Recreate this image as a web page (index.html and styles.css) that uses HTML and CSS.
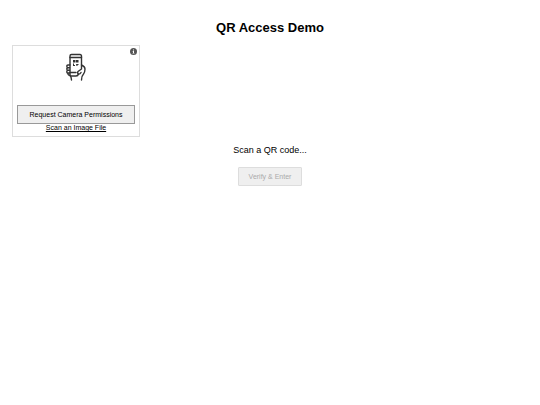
FILE: index.html
```html
<!DOCTYPE html>
<html lang="en">
<head>
  <meta charset="UTF-8">
  <meta name="viewport" content="width=device-width, initial-scale=1.0">
  <title>QR Access Demo</title>
  <link rel="stylesheet" href="styles.css">
</head>
<body>

  <h1>QR Access Demo</h1>

  <div class="reader">
    <button class="info-btn" type="button" aria-label="About the scanner">
      <svg viewBox="0 0 14 14" width="7" height="7">
        <circle cx="7" cy="7" r="7" fill="#555"/>
        <path d="M5 6h3v4h1v1H5v-1h1V7H5zM6 3h2v2H6z" fill="#fff"/>
      </svg>
    </button>
    <svg class="phone-icon" viewBox="0 0 20 28" width="20" height="28" fill="none" stroke="#333" stroke-width="1.4" stroke-linecap="round" stroke-linejoin="round">
      <path d="M15.500 12V3Q15.500 1.500 14 1.500H5.500Q4 1.500 4 3V22Q4 23 5 23H10Q12 23 12.500 21"/>
      <path d="M4 4.500H15.500M4 19.500H10"/>
      <path d="M4 12H2Q0.800 12 0.800 13.300T2 14.700H3.500M2 14.700Q0.800 14.700 0.800 16T2 17.300H3.500M2 17.300Q0.800 17.300 0.800 18.700T2 20H3.500M2 20Q1.500 22 4 22.500Q5.500 24 5.500 27"/>
      <path d="M15.500 12Q19 13.500 19 16Q19 19 17.500 21Q15.500 23 15.500 27M15.500 12V16L12 18.500Q11 20 12 21Q14 21.500 15 19.500"/>
      <path d="M7 7H9.500V9.500H7zM10 7H12.500V9.500H10zM7 10.500H8V12H9V13H7zM10 11H12.500V12H11.500V13H10.500z" fill="#333" stroke="none"/>
    </svg>
    <button class="camera-btn" type="button">Request Camera Permissions</button>
    <a class="file-link" href="#">Scan an Image File</a>
  </div>

  <p class="result" id="result">Scan a QR code...</p>
  <button class="verify-btn" type="button" disabled>Verify &amp; Enter</button>

</body>
</html>
```
FILE: styles.css
```css
body {
  font-family: "Liberation Sans", Arial, sans-serif;
  margin: 0;
  padding: 20px 12px;
  background-color: #fff;
  color: #000;
  text-align: center;
}
h1 {
  margin: 0 0 9px;
  font-size: 13px;
  line-height: 16px;
}
.reader {
  position: relative;
  display: flex;
  flex-direction: column;
  align-items: center;
  box-sizing: border-box;
  width: 100%;
  max-width: 128px;
  padding: 7px 4px 4px;
  border: 1px solid #ddd;
}
.info-btn {
  position: absolute;
  top: 2px;
  right: 2px;
  display: flex;
  padding: 0;
  border: none;
  background: none;
  cursor: pointer;
}
.phone-icon {
  margin-bottom: 24px;
}
button {
  font-family: inherit;
  font-size: 7px;
  line-height: 9px;
}
.camera-btn {
  width: 100%;
  padding: 4px;
  border: 1px solid #999;
  border-radius: 0;
  background-color: #efefef;
  color: #000;
  cursor: pointer;
}
.file-link {
  font-size: 7px;
  line-height: 8px;
  color: #000;
  text-decoration: underline;
}
.result {
  margin: 8px 0 12px;
  font-size: 9px;
  line-height: 10px;
}
.verify-btn {
  display: block;
  margin: 0 auto;
  padding: 4px 10px;
  border: 1px solid #ddd;
  border-radius: 1px;
  background-color: #efefef;
  color: #aaa;
}
```
